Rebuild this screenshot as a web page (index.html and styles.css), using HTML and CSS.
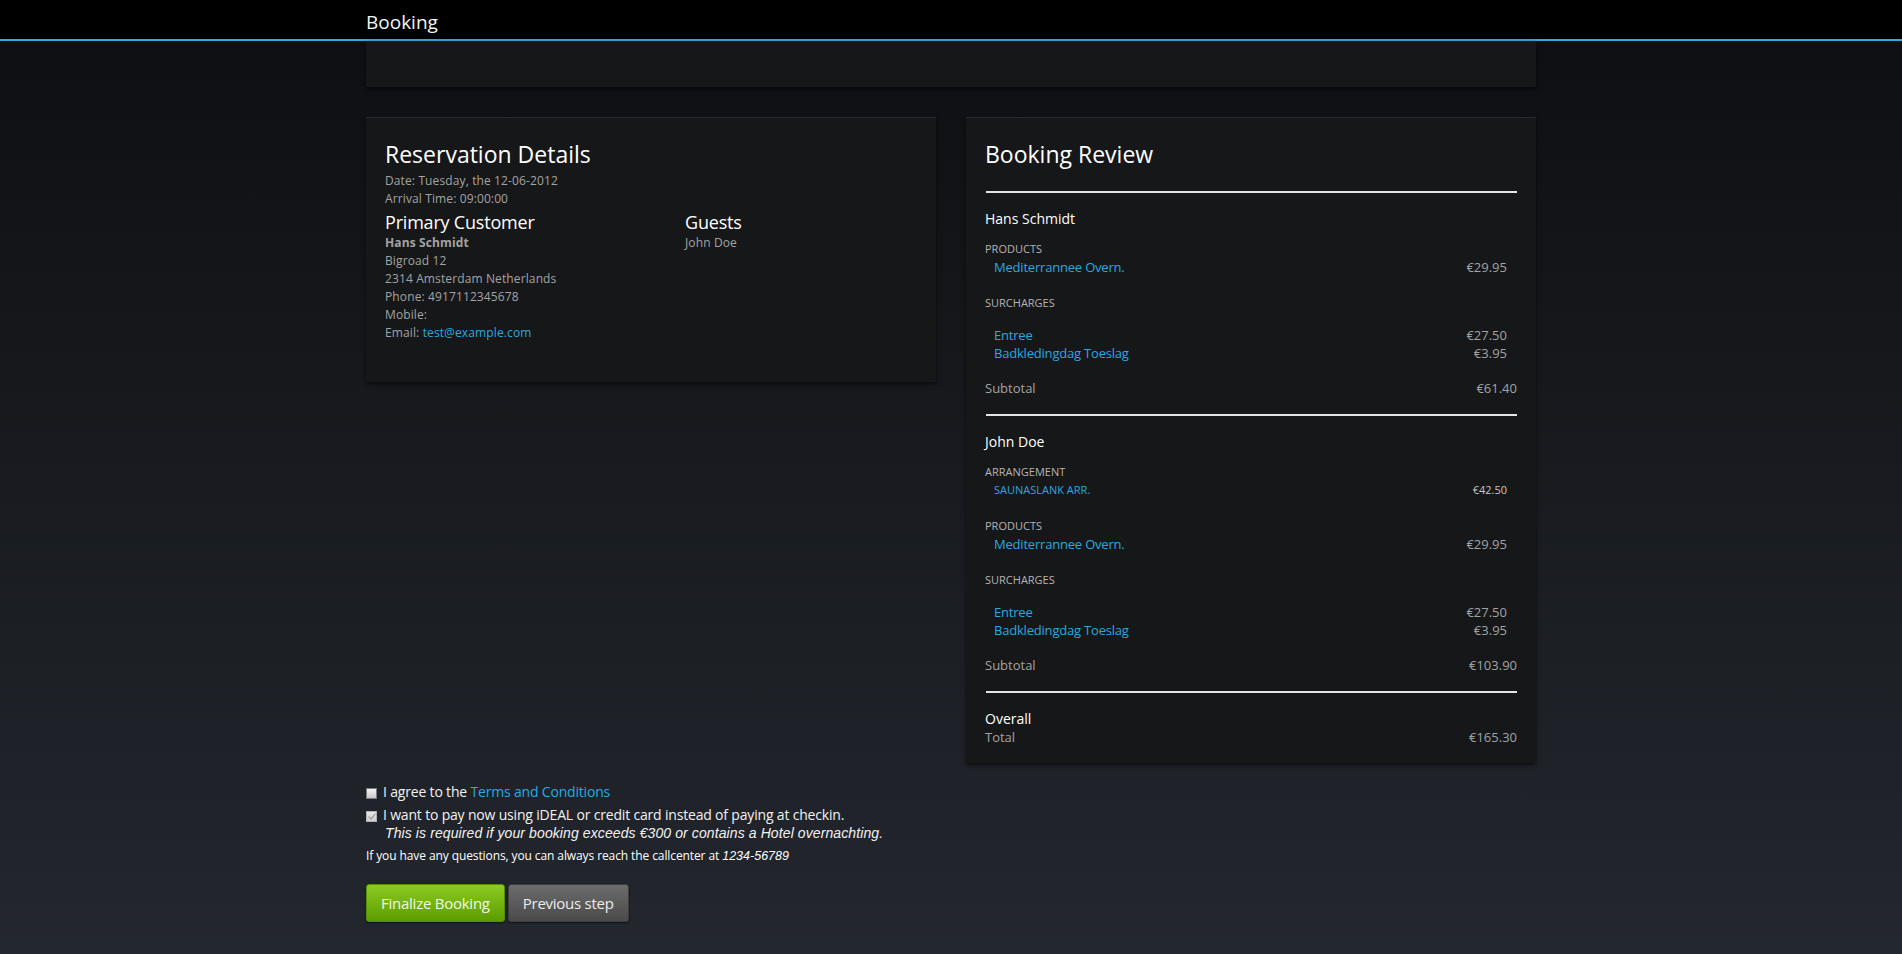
FILE: index.html
```html
<!DOCTYPE html>
<html lang="en">
<head>
<meta charset="utf-8">
<title>Booking</title>
<link rel="stylesheet" href="styles.css">
</head>
<body>
<header class="topbar">
  <div class="container">
    <span class="brand">Booking</span>
  </div>
</header>
<main class="container">
  <div class="panel panel-top"></div>
  <div class="cols">
    <section class="panel panel-details">
      <h2 class="panel-title">Reservation Details</h2>
      <p class="meta">Date: Tuesday, the 12-06-2012</p>
      <p class="meta">Arrival Time: 09:00:00</p>
      <div class="people">
        <div class="people-col">
          <h3 class="sub-title">Primary Customer</h3>
          <p class="meta meta-strong">Hans Schmidt</p>
          <p class="meta">Bigroad 12</p>
          <p class="meta">2314 Amsterdam Netherlands</p>
          <p class="meta">Phone: 4917112345678</p>
          <p class="meta">Mobile:</p>
          <p class="meta">Email: <a class="link" href="#">test@example.com</a></p>
        </div>
        <div class="people-col">
          <h3 class="sub-title">Guests</h3>
          <p class="meta">John Doe</p>
        </div>
      </div>
    </section>
    <section class="panel panel-review">
      <h2 class="panel-title">Booking Review</h2>
      <div class="rule rule-first"></div>
      <div class="guest">
        <div class="guest-name">Hans Schmidt</div>
        <div class="group group-first">
          <div class="group-label">PRODUCTS</div>
          <div class="line"><a class="link" href="#">Mediterrannee Overn.</a><span class="price">€29.95</span></div>
        </div>
        <div class="group">
          <div class="group-label">SURCHARGES</div>
          <div class="lines-spaced">
            <div class="line"><a class="link" href="#">Entree</a><span class="price">€27.50</span></div>
            <div class="line"><a class="link" href="#">Badkledingdag Toeslag</a><span class="price">€3.95</span></div>
          </div>
        </div>
        <div class="subtotal"><span>Subtotal</span><span>€61.40</span></div>
      </div>
      <div class="rule"></div>
      <div class="guest">
        <div class="guest-name">John Doe</div>
        <div class="group group-first">
          <div class="group-label">ARRANGEMENT</div>
          <div class="line line-small"><a class="link" href="#">SAUNASLANK ARR.</a><span class="price">€42.50</span></div>
        </div>
        <div class="group">
          <div class="group-label">PRODUCTS</div>
          <div class="line"><a class="link" href="#">Mediterrannee Overn.</a><span class="price">€29.95</span></div>
        </div>
        <div class="group">
          <div class="group-label">SURCHARGES</div>
          <div class="lines-spaced">
            <div class="line"><a class="link" href="#">Entree</a><span class="price">€27.50</span></div>
            <div class="line"><a class="link" href="#">Badkledingdag Toeslag</a><span class="price">€3.95</span></div>
          </div>
        </div>
        <div class="subtotal"><span>Subtotal</span><span>€103.90</span></div>
      </div>
      <div class="rule"></div>
      <div class="overall">
        <div class="overall-title">Overall</div>
        <div class="subtotal subtotal-total"><span>Total</span><span>€165.30</span></div>
      </div>
    </section>
  </div>

  <form class="confirm">
    <label class="check check-first"><input class="cb" type="checkbox"><span>I agree to the <a class="link" href="#">Terms and Conditions</a></span></label>
    <label class="check"><input class="cb cb-locked" type="checkbox" checked><span>I want to pay now using iDEAL or credit card instead of paying at checkin.</span></label>
    <p class="note">This is required if your booking exceeds €300 or contains a Hotel overnachting.</p>
    <p class="help">If you have any questions, you can always reach the callcenter at <em>1234-56789</em></p>
    <div class="actions">
      <button type="button" class="btn btn-go">Finalize Booking</button>
      <button type="button" class="btn btn-back">Previous step</button>
    </div>
  </form>
</main>
</body>
</html>
```

FILE: styles.css
```css
html {
  background: #23272e;
}
body {
  margin: 0;
  min-height: 954px;
  font-family: "Open Sans", "Noto Sans", sans-serif;
  color: #a3a3a3;
  background: linear-gradient(to bottom, #0d0e10 0px, #0f1013 60px, #23272e 954px);
}
p, h2, h3 {
  margin: 0;
  font-weight: normal;
}
a.link {
  color: #2ba8e0;
  text-decoration: none;
}
.container {
  width: 1170px;
  margin: 0 auto;
}

/* top bar */
.topbar {
  height: 39px;
  background: #000;
  border-bottom: 2px solid #33aadd;
}
.brand {
  display: block;
  padding-top: 6px;
  font-size: 19px;
  line-height: 33px;
  color: #f4f4f4;
}

/* panels */
.panel {
  background: #161719;
  box-shadow: 0 2px 4px rgba(0, 0, 0, 0.6);
}
.panel-top {
  height: 46px;
}
.cols {
  display: flex;
  align-items: flex-start;
  gap: 30px;
  margin-top: 30px;
}
.panel-details,
.panel-review {
  width: 570px;
  box-sizing: border-box;
  border-top: 1px solid #26272a;
  padding: 21px 19px 0;
}
.panel-details {
  height: 265px;
}
.panel-review {
  padding-bottom: 17px;
}
.panel-title {
  font-size: 23px;
  line-height: 30px;
  color: #fff;
  margin-bottom: 3px;
}
.meta {
  font-size: 12px;
  letter-spacing: 0.12px;
  line-height: 18px;
  color: #a3a3a3;
}
.meta-strong {
  font-weight: bold;
}
.people {
  display: grid;
  grid-template-columns: 300px 1fr;
  margin-top: 3px;
}
.sub-title {
  font-size: 18px;
  letter-spacing: -0.2px;
  line-height: 23px;
  color: #fff;
}

/* review */
.rule {
  height: 2px;
  margin: 17px 0 16px 1px;
  background: #e4e4e4;
}
.rule-first {
  margin-top: 22px;
}
.guest-name,
.overall-title {
  font-size: 14px;
  line-height: 20px;
  color: #fff;
}
.overall-title {
  line-height: 19px;
}
.group {
  margin-top: 19px;
}
.group-first {
  margin-top: 12px;
}
.group-label {
  font-size: 11px;
  line-height: 16px;
  color: #b4b4b4;
  margin-bottom: 1px;
}
.lines-spaced {
  padding-top: 14px;
}
.line {
  display: flex;
  justify-content: space-between;
  padding: 0 10px 0 9px;
  font-size: 13px;
  line-height: 18px;
}
.line .link {
  letter-spacing: -0.2px;
}
.line-small {
  font-size: 11px;
}
.line-small .link {
  letter-spacing: 0;
}
.price {
  color: #a3a3a3;
}
.line-small .price {
  color: #c8c8c8;
}
.subtotal {
  display: flex;
  justify-content: space-between;
  margin-top: 17px;
  font-size: 13px;
  line-height: 18px;
  color: #a3a3a3;
}
.subtotal-total {
  margin-top: 0;
}

/* confirmation form */
.confirm {
  margin: 19px 0 0;
  padding-bottom: 30px;
}
.check {
  display: flex;
  align-items: flex-start;
  font-size: 14px;
  letter-spacing: -0.18px;
  line-height: 20px;
  color: #f2f2f2;
}
.check-first {
  margin-bottom: 3px;
}
.cb {
  appearance: none;
  -webkit-appearance: none;
  box-sizing: border-box;
  width: 11px;
  height: 11px;
  margin: 6px 6px 0 0;
  border: 1px solid #7c7c7c;
  background: linear-gradient(to bottom, #f4f4f4, #c9c9c9);
  position: relative;
  flex: none;
}
.cb-locked {
  border-color: #b0b0b0;
  background: linear-gradient(to bottom, #e6e6e6, #cfcfcf);
}
.cb-locked::after {
  content: "";
  position: absolute;
  left: 3px;
  top: 0px;
  width: 3px;
  height: 6px;
  border: solid #8f8f8f;
  border-width: 0 1.5px 1.5px 0;
  transform: rotate(40deg);
}
.note {
  margin-top: -1px;
  margin-left: 19px;
  font-family: "Liberation Sans", Arial, sans-serif;
  font-style: italic;
  font-size: 14px;
  letter-spacing: 0.1px;
  line-height: 18px;
  color: #f2f2f2;
}
.help {
  margin-top: 6px;
  font-size: 12px;
  letter-spacing: -0.1px;
  line-height: 16px;
  color: #fff;
}
.help em {
  font-family: "Liberation Sans", Arial, sans-serif;
  font-size: 12.5px;
  letter-spacing: 0;
}
.actions {
  display: flex;
  gap: 3px;
  margin-top: 20px;
}
.btn {
  height: 38px;
  padding: 0 14px;
  font-family: inherit;
  font-size: 15px;
  letter-spacing: -0.25px;
  line-height: 36px;
  border-radius: 3px;
  border: 1px solid;
  cursor: pointer;
  box-shadow: 0 1px 2px rgba(0, 0, 0, 0.5);
}
.btn-go {
  color: #f0f7e6;
  background: linear-gradient(to bottom, #8ccb22, #5c9c00);
  border-color: #568f05;
}
.btn-back {
  color: #ececec;
  background: linear-gradient(to bottom, #6c6c6c, #4a4a4a);
  border-color: #3d3d3d;
}
```
